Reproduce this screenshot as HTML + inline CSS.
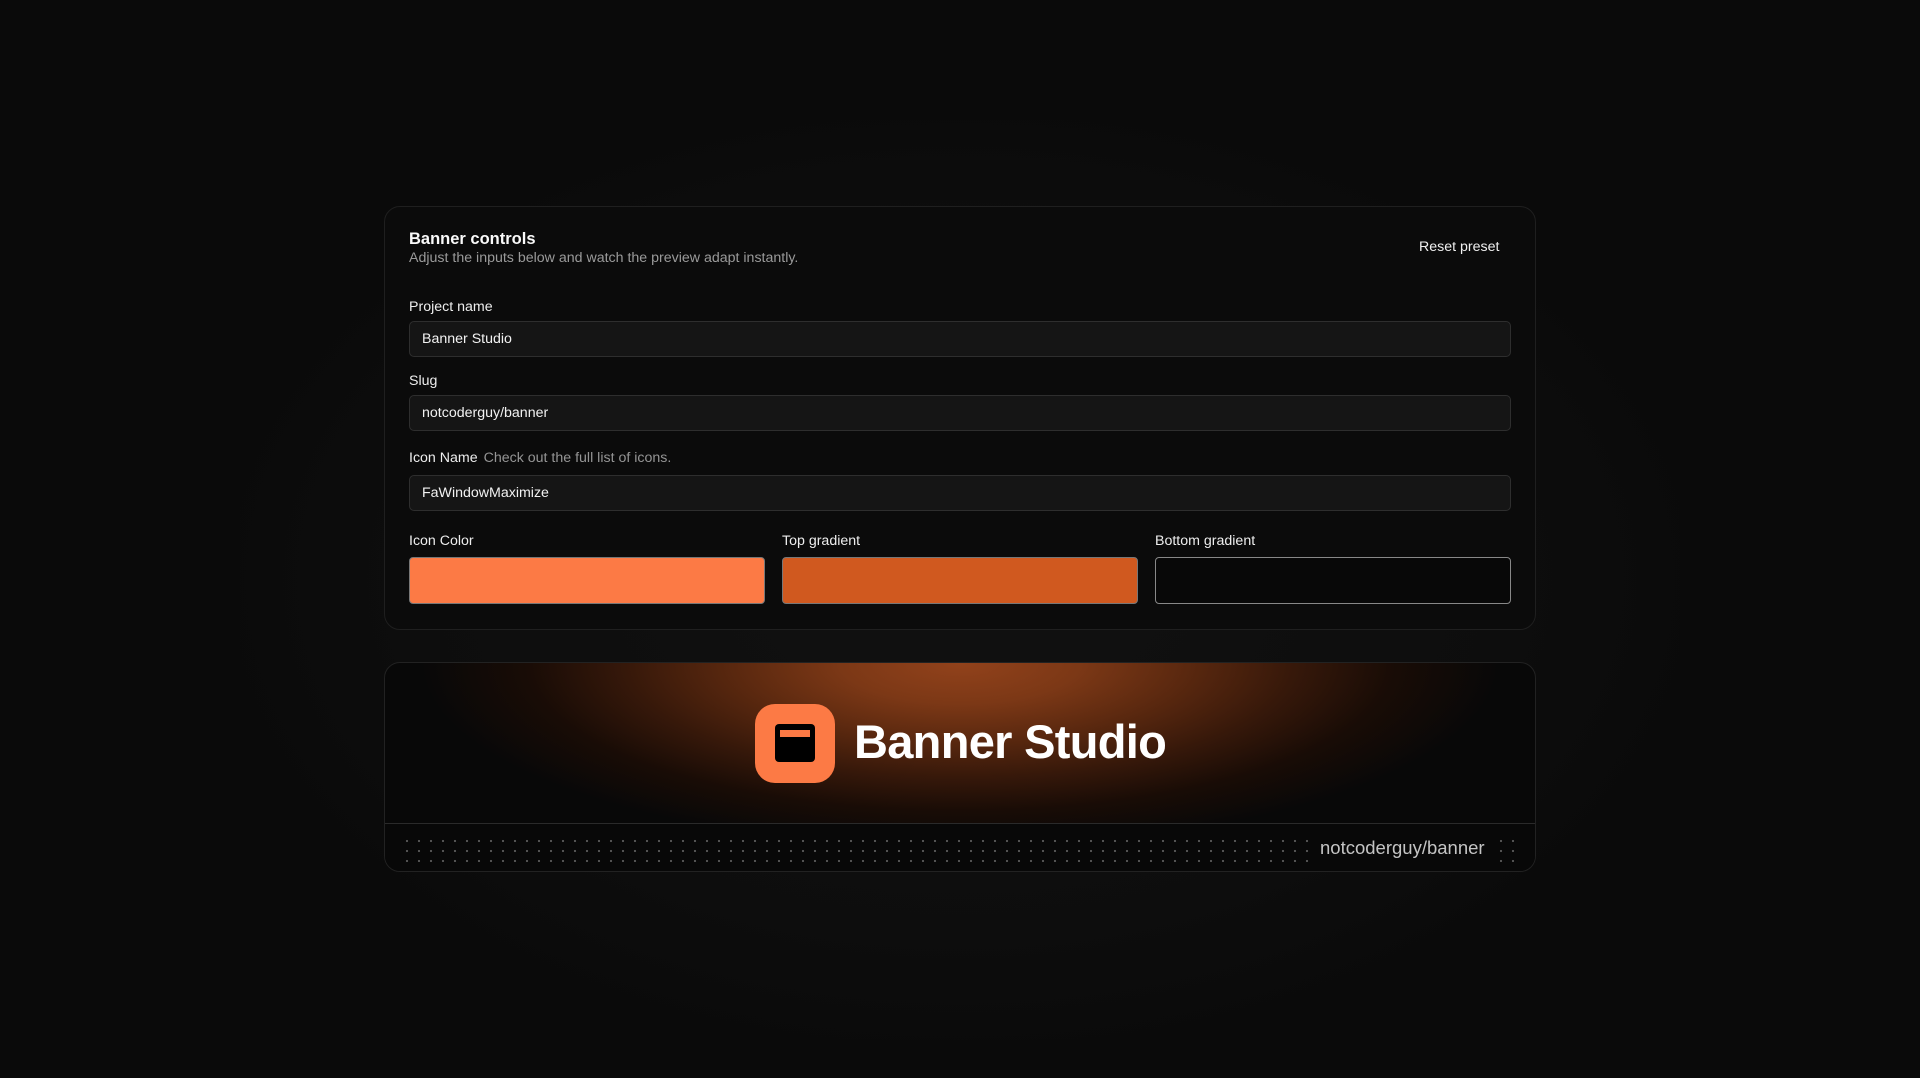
<!DOCTYPE html>
<html><head><meta charset="utf-8"><style>
*{box-sizing:border-box;margin:0;padding:0}
body{width:1920px;height:1078px;background:#0a0a0a;font-family:"Liberation Sans",Arial,sans-serif;color:#f2f2f2;position:relative;overflow:hidden}
.glowbg{position:absolute;left:240px;top:120px;width:1440px;height:920px;border-radius:200px;background:radial-gradient(ellipse at center,#111 0%,#0d0d0d 55%,#0a0a0a 75%);}
.panel{position:absolute;left:384px;top:206px;width:1152px;height:424px;border:1px solid #1f1f1f;border-radius:16px;background:#0b0b0b}
.t{position:absolute;left:24px;top:23px;font-size:16.5px;font-weight:bold;color:#fafafa}
.s{position:absolute;left:24px;top:43px;font-size:14.2px;color:#9a9a9a}
.reset{position:absolute;left:1034px;top:32px;font-size:14.2px;color:#f0f0f0}
.lbl{position:absolute;left:24px;font-size:14.2px;color:#eee}
.lbl span{color:#959595;margin-left:6px}
.inp{position:absolute;left:24px;width:1102px;height:36px;border:1px solid #2e2e2e;border-radius:5px;background:#151515;font-size:14.2px;color:#f2f2f2;padding-left:12px;line-height:34px}
.sw{position:absolute;top:350px;width:356px;height:47px;border-radius:4px;border:1px solid #777}
.banner{position:absolute;left:384px;top:662px;width:1152px;height:210px;border:1px solid #222;border-radius:16px;background:radial-gradient(ellipse 540px 185px at 575px 0px,#92421b 0%,#7c3816 22%,#5a280f 42%,#36180a 62%,#190c06 80%,#080808 100%);overflow:hidden}
.icon{position:absolute;left:370px;top:41px;width:80px;height:79px;border-radius:20px;background:#fc7a45}
.icon i{position:absolute;left:20px;top:20px;width:40px;height:38px;border-radius:4px;background:#000}
.icon i b{position:absolute;left:5px;top:6px;width:30px;height:7px;background:#fc7a45}
.bt{position:absolute;left:469px;top:51px;font-size:47px;font-weight:bold;color:#fff;letter-spacing:-0.7px}
.foot{position:absolute;left:0;top:160px;width:100%;height:50px;border-top:1px solid #2a2a2a;background:#080808}
.dots{position:absolute;top:12px;height:26px;background-image:radial-gradient(circle,#5a5a5a 0.9px,transparent 1.3px);background-size:12px 10px}
.slug{position:absolute;left:935px;top:13px;font-size:18.5px;color:#c4c4c4}
</style></head><body>
<div class="glowbg"></div>
<div class="panel">
<div class="t">Banner controls</div>
<div class="s">Adjust the inputs below and watch the preview adapt instantly.</div>
<div class="reset">Reset preset</div>
<div class="lbl" style="top:92px">Project name</div>
<div class="inp" style="top:114px">Banner Studio</div>
<div class="lbl" style="top:166px">Slug</div>
<div class="inp" style="top:188px">notcoderguy/banner</div>
<div class="lbl" style="top:243px">Icon Name<span>Check out the full list of icons.</span></div>
<div class="inp" style="top:268px">FaWindowMaximize</div>
<div class="lbl" style="top:326px">Icon Color</div>
<div class="lbl" style="top:326px;left:397px">Top gradient</div>
<div class="lbl" style="top:326px;left:770px">Bottom gradient</div>
<div class="sw" style="left:24px;background:#fc7a45"></div>
<div class="sw" style="left:397px;background:#d0591f"></div>
<div class="sw" style="left:770px;background:#080808;border-color:#888"></div>
</div>
<div class="banner">
<div class="icon"><i><b></b></i></div>
<div class="bt">Banner Studio</div>
<div class="foot">
<div class="dots" style="left:16px;width:912px"></div>
<div class="slug">notcoderguy/banner</div>
<div class="dots" style="left:1110px;width:24px"></div>
</div>
</div>
</body></html>
